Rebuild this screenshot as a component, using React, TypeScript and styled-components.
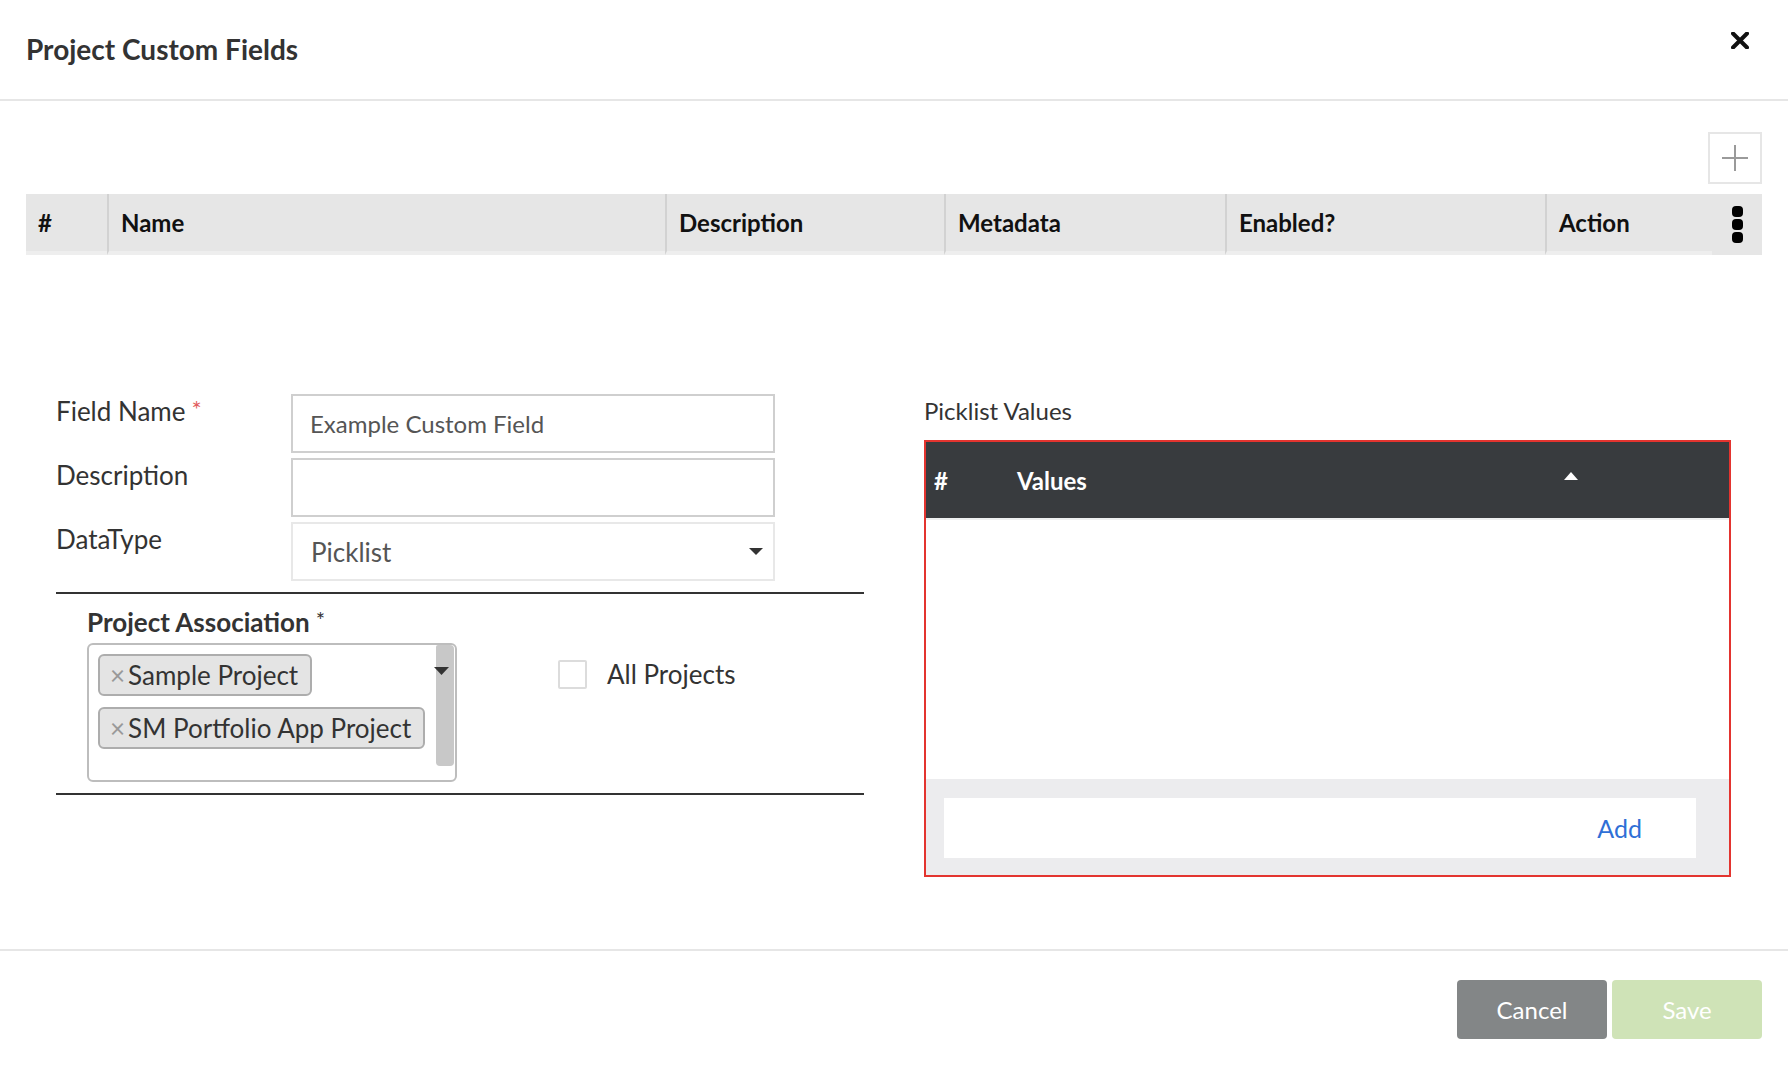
import React from 'react';
import styled, { createGlobalStyle } from 'styled-components';

const GlobalStyle = createGlobalStyle`
  html, body { margin: 0; padding: 0; background: #fff; }
  body { font-family: Lato, "Liberation Sans", sans-serif; color: #333; }
  * { box-sizing: border-box; }
`;

const Modal = styled.div`
  width: 1788px;
  height: 1066px;
  display: flex;
  flex-direction: column;
  background: #fff;
  overflow: hidden;
`;

const Header = styled.header`
  height: 101px;
  flex: none;
  display: flex;
  align-items: center;
  justify-content: space-between;
  padding: 0 39px 0 26px;
  border-bottom: 2px solid #e6e6e6;
`;

const Title = styled.h1`
  margin: 0;
  font-size: 28px;
  font-weight: 700;
  color: #333;
  line-height: 1.2;
`;

const CloseButton = styled.button`
  align-self: flex-start;
  margin-top: 32px;
  width: 18px;
  height: 17px;
  padding: 0;
  border: none;
  background: none;
  display: flex;
`;

const Body = styled.main`
  flex: 1;
  display: flex;
  flex-direction: column;
  padding: 31px 26px 0;
`;

const Toolbar = styled.div`
  display: flex;
  justify-content: flex-end;
  margin-bottom: 10px;
`;

const IconButton = styled.button`
  width: 54px;
  height: 52px;
  padding: 0;
  border: 2px solid #e6e6e6;
  background: #fff;
  display: flex;
  align-items: center;
  justify-content: center;
`;

const GridHeader = styled.div`
  display: grid;
  grid-template-columns: 81px 558px 279px 281px 320px 167px 50px;
  height: 61px;
  background: #e6e6e6;
`;

const HeadCell = styled.div<{ $divider?: boolean; $menu?: boolean }>`
  display: flex;
  align-items: center;
  justify-content: ${(p) => (p.$menu ? 'center' : 'flex-start')};
  padding-left: ${(p) => (p.$menu ? '0' : '12px')};
  font-size: 24px;
  font-weight: 700;
  color: #111;
  border-left: ${(p) => (p.$divider ? '2px solid #d2d2d2' : 'none')};
  border-bottom: ${(p) => (p.$menu ? 'none' : '4px solid #eeeeee')};
`;

const Form = styled.section`
  margin-top: 139px;
  height: 483px;
  display: grid;
  grid-template-columns: 808px 807px;
  column-gap: 60px;
  padding: 0 31px 0 30px;
`;

const LeftColumn = styled.div`
  display: flex;
  flex-direction: column;
`;

const FieldRow = styled.div`
  display: grid;
  grid-template-columns: 235px 484px;
  height: 59px;
  & + & { margin-top: 5px; }
`;

const FieldLabel = styled.label`
  font-size: 26px;
  line-height: 31px;
  padding-top: 2px;
  color: #333;
`;

const RequiredMark = styled.span`
  color: #e25d60;
  font-size: 24px;
  margin-left: 6px;
  vertical-align: top;
  position: relative;
  top: -3px;
`;

const TextInput = styled.input`
  width: 484px;
  height: 59px;
  border: 2px solid #cfcfcf;
  border-radius: 0;
  padding: 0 17px;
  font-family: Lato, "Liberation Sans", sans-serif;
  font-size: 24px;
  color: #555;
  background: #fff;
  outline: none;
`;

const SelectBox = styled.div`
  height: 59px;
  border: 2px solid #e8e8e8;
  display: flex;
  align-items: center;
  justify-content: space-between;
  padding: 0 10px 0 18px;
  font-size: 26px;
  color: #555;
`;

const AssociationSection = styled.div`
  margin-top: 11px;
  border-top: 2px solid #333;
  border-bottom: 2px solid #333;
  padding: 14px 0 11px 31px;
`;

const SectionLabel = styled.div`
  font-size: 26px;
  line-height: 29px;
  font-weight: 700;
  color: #333;
  margin-bottom: 6px;
`;

const PlainMark = styled.span`
  font-weight: 400;
  font-size: 22px;
  vertical-align: top;
  position: relative;
  top: -3px;
  margin-left: 6px;
`;

const AssociationRow = styled.div`
  display: flex;
  align-items: flex-start;
`;

const MultiSelect = styled.div`
  width: 370px;
  height: 139px;
  border: 2px solid #bdbdbd;
  border-radius: 6px;
  display: flex;
  padding-left: 9px;
`;

const ChipList = styled.div`
  flex: 1;
  display: flex;
  flex-direction: column;
  align-items: flex-start;
  gap: 11px;
  padding-top: 9px;
`;

const Chip = styled.span`
  height: 42px;
  display: inline-flex;
  align-items: center;
  padding: 0 12px 0 10px;
  background: #e4e4e4;
  border: 2px solid #adadad;
  border-radius: 6px;
  font-size: 26px;
  color: #333;
  white-space: nowrap;
`;

const ChipRemove = styled.span`
  color: #999;
  font-size: 26px;
  margin-right: 3px;
`;

const ScrollTrack = styled.div`
  position: relative;
  width: 18px;
  height: 121px;
  margin-right: 1px;
  background: #c8c8c8;
  border-radius: 2px 4px 4px 4px;
`;

const TrackArrow = styled.svg`
  position: absolute;
  top: 22px;
  left: -2px;
`;

const CheckGroup = styled.label`
  display: flex;
  align-items: center;
  gap: 20px;
  margin-left: 101px;
  margin-top: 15px;
  font-size: 26px;
  color: #333;
`;

const CheckBox = styled.span`
  width: 29px;
  height: 29px;
  border: 2px solid #dcdcdc;
  border-radius: 2px;
  background: #fff;
`;

const RightColumn = styled.div`
  padding-top: 3px;
  display: flex;
  flex-direction: column;
`;

const PicklistLabel = styled.div`
  font-size: 24px;
  line-height: 28px;
  color: #333;
  margin-bottom: 15px;
`;

const PicklistBox = styled.div`
  height: 437px;
  border: 2px solid #e3342f;
  display: flex;
  flex-direction: column;
`;

const PicklistHead = styled.div`
  height: 78px;
  flex: none;
  display: flex;
  align-items: center;
  background: #383b3e;
  border-bottom: 2px solid #eef0f0;
  padding-left: 8px;
  color: #fff;
  font-size: 24px;
  font-weight: 700;
`;

const HeadText = styled.span<{ $width: number }>`
  width: ${(p) => p.$width}px;
`;

const SortArrow = styled.svg`
  align-self: flex-start;
  margin-top: 30px;
`;

const PicklistBody = styled.div`
  flex: 1;
  background: #fff;
`;

const PicklistFooter = styled.div`
  height: 96px;
  flex: none;
  background: #ececee;
  padding: 19px 33px 17px 18px;
`;

const AddBar = styled.div`
  height: 60px;
  background: #fff;
  display: flex;
  align-items: center;
  justify-content: flex-end;
  padding-right: 54px;
`;

const LinkButton = styled.button`
  border: none;
  background: none;
  padding: 0;
  font-family: Lato, "Liberation Sans", sans-serif;
  font-size: 25px;
  color: #2f6fd6;
`;

const Footer = styled.footer`
  height: 117px;
  flex: none;
  border-top: 2px solid #e6e6e6;
  padding: 29px 26px 0;
  display: flex;
  justify-content: flex-end;
  align-items: flex-start;
  gap: 5px;
`;

const ActionButton = styled.button<{ $variant: 'cancel' | 'save' }>`
  width: 150px;
  height: 59px;
  border: none;
  border-radius: 4px;
  font-family: Lato, "Liberation Sans", sans-serif;
  font-size: 24px;
  color: #fff;
  background: ${(p) => (p.$variant === 'cancel' ? '#838687' : '#cfe3b7')};
`;

const columns = ['#', 'Name', 'Description', 'Metadata', 'Enabled?', 'Action'];

export default function App() {
  return (
    <>
      <GlobalStyle />
      <Modal>
        <Header>
          <Title>Project Custom Fields</Title>
          <CloseButton aria-label="Close">
            <svg width="18" height="17" viewBox="0 0 18 17">
              <path d="M2 1.5 L16 15.5 M16 1.5 L2 15.5" stroke="#111" strokeWidth="4" strokeLinecap="round" />
            </svg>
          </CloseButton>
        </Header>
        <Body>
          <Toolbar>
            <IconButton aria-label="Add">
              <svg width="28" height="28" viewBox="0 0 28 28">
                <path d="M14 1 V27 M1 14 H27" stroke="#9a9a9a" strokeWidth="2" />
              </svg>
            </IconButton>
          </Toolbar>
          <GridHeader>
            {columns.map((c, i) => (
              <HeadCell key={c} $divider={i > 0}>
                {c}
              </HeadCell>
            ))}
            <HeadCell $menu>
              <svg width="11" height="37" viewBox="0 0 11 37">
                <rect x="0" y="0" width="11" height="11" rx="4" fill="#000" />
                <rect x="0" y="13" width="11" height="11" rx="4" fill="#000" />
                <rect x="0" y="26" width="11" height="11" rx="4" fill="#000" />
              </svg>
            </HeadCell>
          </GridHeader>

          <Form>
            <LeftColumn>
              <FieldRow>
                <FieldLabel>
                  Field Name<RequiredMark>*</RequiredMark>
                </FieldLabel>
                <TextInput readOnly value="Example Custom Field" />
              </FieldRow>
              <FieldRow>
                <FieldLabel>Description</FieldLabel>
                <TextInput readOnly value="" />
              </FieldRow>
              <FieldRow>
                <FieldLabel>DataType</FieldLabel>
                <SelectBox>
                  <span>Picklist</span>
                  <svg width="14" height="7" viewBox="0 0 14 7">
                    <path d="M0 0 H14 L7 7 Z" fill="#333" />
                  </svg>
                </SelectBox>
              </FieldRow>
              <AssociationSection>
                <SectionLabel>
                  Project Association<PlainMark>*</PlainMark>
                </SectionLabel>
                <AssociationRow>
                  <MultiSelect>
                    <ChipList>
                      <Chip>
                        <ChipRemove>×</ChipRemove>Sample Project
                      </Chip>
                      <Chip>
                        <ChipRemove>×</ChipRemove>SM Portfolio App Project
                      </Chip>
                    </ChipList>
                    <ScrollTrack>
                      <TrackArrow width="15" height="8" viewBox="0 0 15 8">
                        <path d="M0 0 H15 L7.5 8 Z" fill="#333" />
                      </TrackArrow>
                    </ScrollTrack>
                  </MultiSelect>
                  <CheckGroup>
                    <CheckBox />
                    All Projects
                  </CheckGroup>
                </AssociationRow>
              </AssociationSection>
            </LeftColumn>

            <RightColumn>
              <PicklistLabel>Picklist Values</PicklistLabel>
              <PicklistBox>
                <PicklistHead>
                  <HeadText $width={83}>#</HeadText>
                  <HeadText $width={547}>Values</HeadText>
                  <SortArrow width="14" height="8" viewBox="0 0 14 8">
                    <path d="M0 8 H14 L7 0 Z" fill="#fff" />
                  </SortArrow>
                </PicklistHead>
                <PicklistBody />
                <PicklistFooter>
                  <AddBar>
                    <LinkButton>Add</LinkButton>
                  </AddBar>
                </PicklistFooter>
              </PicklistBox>
            </RightColumn>
          </Form>
        </Body>
        <Footer>
          <ActionButton $variant="cancel">Cancel</ActionButton>
          <ActionButton $variant="save">Save</ActionButton>
        </Footer>
      </Modal>
    </>
  );
}
